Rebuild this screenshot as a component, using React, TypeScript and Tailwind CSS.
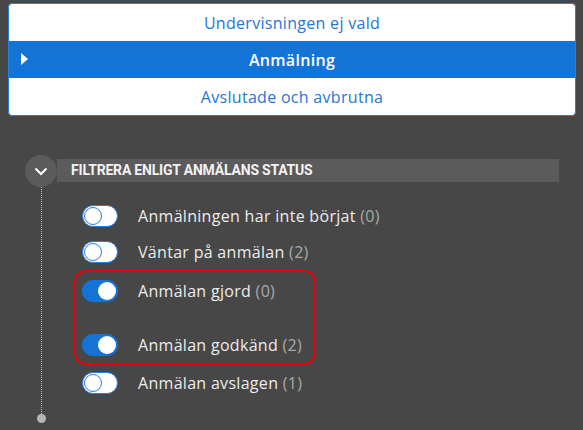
import type { ReactNode } from "react";

const tabs = [
  { label: "Undervisningen ej vald", active: false },
  { label: "Anmälning", active: true },
  { label: "Avslutade och avbrutna", active: false },
];

function Toggle({ on }: { on: boolean }) {
  if (on) {
    return (
      <span className="flex h-[22px] w-[36px] shrink-0 items-center justify-end rounded-full bg-[#1673d6] pr-[2px]">
        <span className="h-[18px] w-[18px] rounded-full bg-white" />
      </span>
    );
  }
  return (
    <span className="flex h-[22px] w-[36px] shrink-0 items-center rounded-full border-[1.5px] border-[#2b7ddb] bg-white pl-[1px]">
      <span className="h-[18px] w-[18px] rounded-full border-[1.5px] border-[#2b7ddb] bg-white" />
    </span>
  );
}

function Item({ on, label, count }: { on: boolean; label: string; count: number }) {
  return (
    <div className="flex h-9 items-center gap-[20px]">
      <Toggle on={on} />
      <span className="text-[16px] tracking-[0.3px] text-[#ececec]">
        {label} <span className="text-[#a9a9a9]">({count})</span>
      </span>
    </div>
  );
}

function Highlight({ children }: { children: ReactNode }) {
  return (
    <div className="-ml-[8px] flex w-[242px] flex-col gap-[18px] rounded-[12px] border-2 border-[#e8000b] pl-[6px] pt-px">
      {children}
    </div>
  );
}

export default function App() {
  return (
    <div
      className="h-[430px] w-[583px] overflow-hidden bg-[#474747] pt-[3px]"
      style={{ fontFamily: '"Open Sans", "Noto Sans", sans-serif' }}
    >
      <div className="mx-[8px] w-[568px] overflow-hidden rounded-[4px] border border-[#2b7ddb] bg-white">
        {tabs.map((t) => (
          <div
            key={t.label}
            className={
              t.active
                ? "relative flex h-[37px] items-center justify-center bg-[#1474d6] text-[16px] font-semibold tracking-[0.3px] text-white"
                : "flex h-[37px] items-center justify-center text-[16px] tracking-[0.3px] text-[#2477d6]"
            }
          >
            {t.active && (
              <svg className="absolute left-[12px] top-[12px]" width="7" height="12" viewBox="0 0 7 12">
                <path d="M0 0 L7 6 L0 12 Z" fill="white" />
              </svg>
            )}
            {t.label}
          </div>
        ))}
      </div>

      <div className="ml-[25px] mt-[39px] flex">
        <div className="flex w-[32px] flex-col items-center">
          <div className="flex h-[32px] w-[32px] items-center justify-center rounded-full bg-[#5b5b5b]">
            <svg width="14" height="9" viewBox="0 0 14 9">
              <path d="M1.5 1.5 L7 7 L12.5 1.5" fill="none" stroke="white" strokeWidth="2" />
            </svg>
          </div>
          <div className="h-[227px] border-l border-dotted border-[#bdbdbd]" />
          <div className="h-[9px] w-[9px] rounded-full bg-[#b5b5b5]" />
        </div>
        <div className="flex-1">
          <div className="mr-[24px] mt-[4px] flex h-[23px] items-center bg-[#5b5b5b] pl-[14px]">
            <span
              className="text-[14px] font-bold tracking-[-0.2px] text-[#f2f2f2]"
              style={{ fontFamily: "Roboto, sans-serif" }}
            >
              FILTRERA ENLIGT ANMÄLANS STATUS
            </span>
          </div>
          <div className="ml-[25px] mt-[16px] flex flex-col">
            <Item on={false} label="Anmälningen har inte börjat" count={0} />
            <Item on={false} label="Väntar på anmälan" count={2} />
            <Highlight>
              <Item on label="Anmälan gjord" count={0} />
              <Item on label="Anmälan godkänd" count={2} />
            </Highlight>
            <Item on={false} label="Anmälan avslagen" count={1} />
          </div>
        </div>
      </div>
    </div>
  );
}
